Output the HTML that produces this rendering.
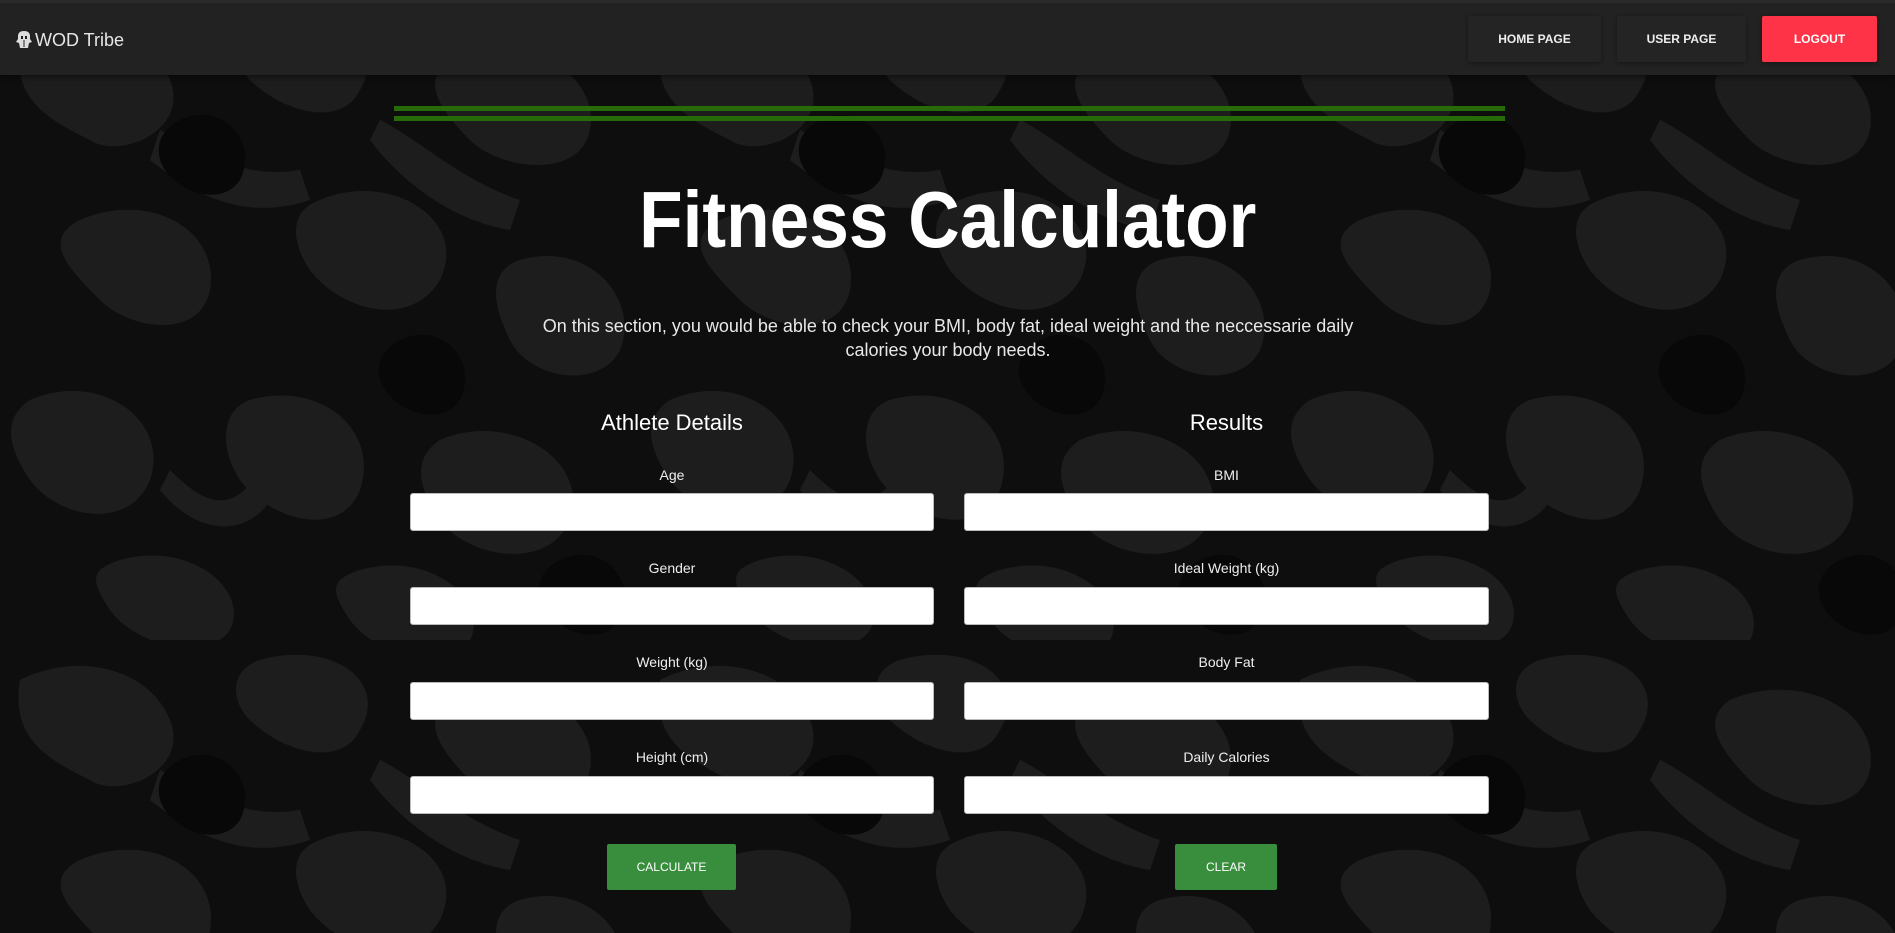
<!DOCTYPE html>
<html><head><meta charset="utf-8"><style>
*{margin:0;padding:0;box-sizing:border-box}
html,body{width:1895px;height:933px;overflow:hidden;background:#0e0e0e;font-family:"Liberation Sans",sans-serif;color:#fff}
#bg{position:absolute;left:0;top:0;width:1895px;height:933px}
nav{position:absolute;left:0;top:0;width:1895px;height:75px;background:#222;border-top:3px solid #2b2b2b;box-shadow:0 2px 6px rgba(0,0,0,.5)}
.brand{position:absolute;left:16px;top:27px;font-size:18px;color:#e6e6e6}
.brand svg{vertical-align:-3px;margin-right:3px}
.nb{position:absolute;top:13px;height:46px;line-height:46px;text-align:center;font-size:12px;font-weight:bold;color:#eee;background:#242424;box-shadow:0 1px 4px rgba(0,0,0,.35);border-radius:2px}
.line{position:absolute;left:394px;width:1111px;height:5px;background:#266a0a}
h1{position:absolute;left:0;width:1895px;top:172px;text-align:center;font-size:80px;font-weight:bold;line-height:96px}
h1 span{display:inline-block;transform:scaleX(.89)}
p.d{position:absolute;left:530px;width:836px;top:314px;text-align:center;font-size:18px;line-height:24px;color:#e8e8e8}
h2{position:absolute;font-size:22px;font-weight:normal;text-align:center;top:410px}
.lb{position:absolute;font-size:14px;text-align:center;color:#eee}
.in{position:absolute;height:38px;background:#fff;border:1px solid #bbb;border-radius:3px}
.bt{position:absolute;top:844px;height:46px;line-height:46px;background:#388e3c;color:#fff;font-size:12px;text-align:center;border-radius:2px}
</style></head><body>
<svg id="bg" width="1895" height="933"><defs><pattern id="p" width="640" height="640" patternUnits="userSpaceOnUse">
<rect width="640" height="640" fill="#0e0e0e"/>
<g fill="#1d1d1d">
<path d="M20 40 C80 10 150 30 170 80 C190 130 120 160 90 140 C50 120 10 100 20 40Z"/>
<path d="M260 20 C330 0 390 40 360 90 C340 130 280 110 250 80 C230 60 230 30 260 20Z"/>
<path d="M450 60 C520 30 600 70 590 130 C580 180 500 170 470 140 C440 110 420 80 450 60Z"/>
<path d="M80 220 C150 190 220 230 210 290 C200 340 130 330 100 300 C70 270 40 240 80 220Z"/>
<path d="M320 200 C390 170 470 220 440 280 C410 330 340 310 310 270 C290 240 290 210 320 200Z"/>
<path d="M520 260 C590 240 640 300 620 350 C600 390 530 380 510 340 C490 300 490 270 520 260Z"/>
<path d="M30 400 C100 370 170 420 150 480 C130 530 60 520 30 480 C10 450 0 420 30 400Z"/>
<path d="M250 400 C320 380 380 430 360 490 C340 540 270 520 240 480 C220 450 220 410 250 400Z"/>
<path d="M440 440 C510 410 590 460 570 520 C550 570 470 560 440 520 C420 490 410 460 440 440Z"/>
<path d="M120 560 C190 540 250 590 230 630 C210 660 140 650 110 610 C90 580 90 570 120 560Z"/>
<path d="M360 570 C430 550 490 600 470 640 C450 670 380 660 350 620 C330 590 330 580 360 570Z"/>
<path d="M160 130 C200 150 240 180 300 170 L310 200 C250 220 200 200 150 160Z"/>
<path d="M380 120 C420 140 460 180 520 200 L510 230 C450 220 400 180 370 140Z"/>
<path d="M170 470 C200 500 230 520 260 470 L280 480 C260 540 200 540 160 490Z"/>
</g>
<g fill="#080808">
<path d="M180 120 C220 100 260 140 240 180 C220 210 170 190 160 160 C155 140 165 128 180 120Z"/>
<path d="M400 340 C440 320 480 360 460 400 C440 430 390 410 380 380 C375 360 385 348 400 340Z"/>
<path d="M560 560 C600 540 640 580 620 620 C600 650 550 630 540 600 C535 580 545 568 560 560Z"/>
</g></pattern></defs><rect width="1895" height="933" fill="url(#p)"/></svg>
<nav>
<div class="brand"><svg width="16" height="18" viewBox="0 0 16 18"><path d="M8 0C4 0 2 2 2 5v3l-2 3 3 1 1 5h8l1-5 3-1-2-3V5c0-3-2-5-6-5z" fill="#ddd"/><path d="M5 5h2v3H5zM9 5h2v3H9zM7.5 9h1v7h-1z" fill="#222"/></svg>WOD Tribe</div>
<div class="nb" style="left:1468px;width:133px">HOME PAGE</div>
<div class="nb" style="left:1617px;width:129px">USER PAGE</div>
<div class="nb" style="left:1762px;width:115px;background:#ff3347;color:#fff">LOGOUT</div>
</nav>
<div class="line" style="top:106px"></div>
<div class="line" style="top:116px"></div>
<h1><span>Fitness Calculator</span></h1>
<p class="d">On this section, you would be able to check your BMI, body fat, ideal weight and the neccessarie daily calories your body needs.</p>
<h2 style="left:410px;width:524px">Athlete Details</h2>
<h2 style="left:964px;width:525px">Results</h2>
<div class="lb" style="left:410px;width:524px;top:467px">Age</div>
<div class="lb" style="left:410px;width:524px;top:560px">Gender</div>
<div class="lb" style="left:410px;width:524px;top:654px">Weight (kg)</div>
<div class="lb" style="left:410px;width:524px;top:749px">Height (cm)</div>
<div class="lb" style="left:964px;width:525px;top:467px">BMI</div>
<div class="lb" style="left:964px;width:525px;top:560px">Ideal Weight (kg)</div>
<div class="lb" style="left:964px;width:525px;top:654px">Body Fat</div>
<div class="lb" style="left:964px;width:525px;top:749px">Daily Calories</div>
<div class="in" style="left:410px;width:524px;top:493px"></div>
<div class="in" style="left:410px;width:524px;top:587px"></div>
<div class="in" style="left:410px;width:524px;top:682px"></div>
<div class="in" style="left:410px;width:524px;top:776px"></div>
<div class="in" style="left:964px;width:525px;top:493px"></div>
<div class="in" style="left:964px;width:525px;top:587px"></div>
<div class="in" style="left:964px;width:525px;top:682px"></div>
<div class="in" style="left:964px;width:525px;top:776px"></div>
<div class="bt" style="left:607px;width:129px">CALCULATE</div>
<div class="bt" style="left:1175px;width:102px">CLEAR</div>
</body></html>
